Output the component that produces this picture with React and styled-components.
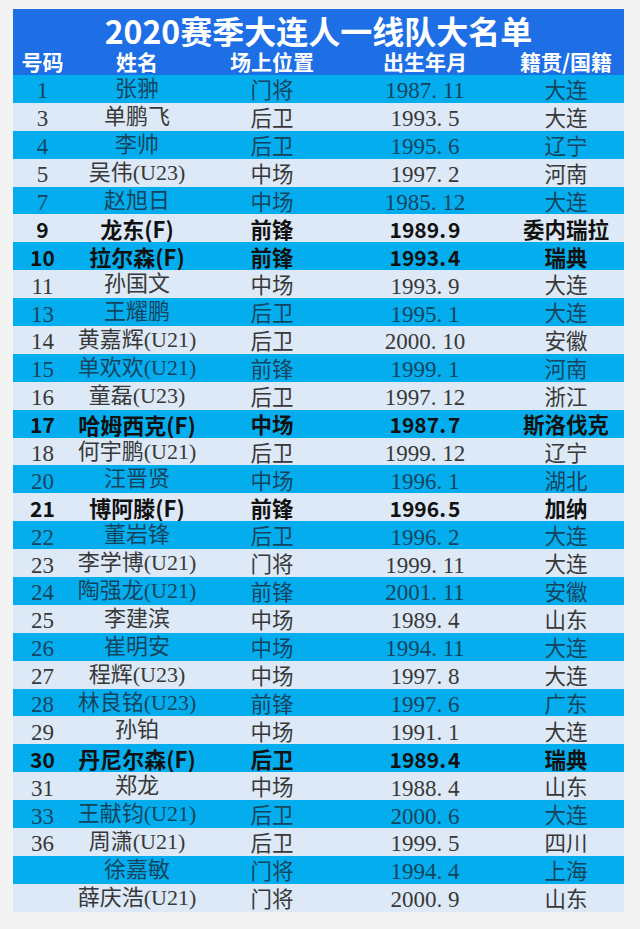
import styled, { createGlobalStyle, css } from 'styled-components';

const GlobalStyle = createGlobalStyle`
  html, body {
    margin: 0;
    padding: 0;
    background: #f3f3f3;
  }
  body {
    font-family: 'Noto Sans CJK SC', sans-serif;
  }
`;

const Page = styled.div`
  width: 640px;
  height: 929px;
  padding: 9px 0 0 13px;
  box-sizing: border-box;
`;

const Sheet = styled.div`
  width: 611px;
  display: flex;
  flex-direction: column;
`;

const Title = styled.div`
  height: 38px;
  display: flex;
  align-items: center;
  justify-content: center;
  background: #1e6fe6;
  color: #ffffff;
  font-family: 'Noto Sans CJK SC', sans-serif;
  font-weight: 700;
  font-size: 32px;
  line-height: 1;
  padding-top: 3px;
  box-sizing: border-box;
`;

const columns = '59px 130px 140px 166px 116px';

const HeaderRow = styled.div`
  display: grid;
  grid-template-columns: ${columns};
  height: 28px;
  background: #1e6fe6;
  color: #ffffff;
  font-family: 'Noto Sans CJK SC', sans-serif;
  font-weight: 700;
  font-size: 21px;
  line-height: 1;
`;

const HeadCell = styled.div`
  display: flex;
  align-items: center;
  justify-content: center;
  white-space: nowrap;
`;

const Row = styled.div`
  display: grid;
  grid-template-columns: ${columns};
  height: 27.9px;
  background: ${(p) => (p.$cyan ? '#04aeee' : '#dde9f6')};
  color: ${(p) => (p.$cyan ? '#14455f' : '#383838')};
  font-family: 'Liberation Serif', 'Noto Sans CJK SC', serif;
  font-size: 22px;
  line-height: 1;
  ${(p) =>
    p.$bold &&
    css`
      font-family: 'Noto Sans CJK SC', sans-serif;
      font-weight: 700;
      color: #111111;
    `}
`;

const Cell = styled.div`
  display: flex;
  align-items: center;
  justify-content: center;
  white-space: nowrap;
  box-sizing: border-box;
  padding-top: ${(p) => p.$shift || '0'};
  font-size: ${(p) => p.$size || 'inherit'};
`;

const CjkCell = styled(Cell)`
  font-family: 'Noto Sans CJK SC', sans-serif;
  font-size: 21.5px;
  font-weight: ${(p) => (p.$bold ? 700 : 400)};
`;

const Dot = styled.span`
  margin-right: ${(p) => (p.$bold ? '0.1em' : '0.25em')};
`;

const players = [
  ['1', '张翀', '门将', '1987.11', '大连'],
  ['3', '单鹏飞', '后卫', '1993.5', '大连'],
  ['4', '李帅', '后卫', '1995.6', '辽宁'],
  ['5', '吴伟(U23)', '中场', '1997.2', '河南'],
  ['7', '赵旭日', '中场', '1985.12', '大连'],
  ['9', '龙东(F)', '前锋', '1989.9', '委内瑞拉', true],
  ['10', '拉尔森(F)', '前锋', '1993.4', '瑞典', true],
  ['11', '孙国文', '中场', '1993.9', '大连'],
  ['13', '王耀鹏', '后卫', '1995.1', '大连'],
  ['14', '黄嘉辉(U21)', '后卫', '2000.10', '安徽'],
  ['15', '单欢欢(U21)', '前锋', '1999.1', '河南'],
  ['16', '童磊(U23)', '后卫', '1997.12', '浙江'],
  ['17', '哈姆西克(F)', '中场', '1987.7', '斯洛伐克', true],
  ['18', '何宇鹏(U21)', '后卫', '1999.12', '辽宁'],
  ['20', '汪晋贤', '中场', '1996.1', '湖北'],
  ['21', '博阿滕(F)', '前锋', '1996.5', '加纳', true],
  ['22', '董岩锋', '后卫', '1996.2', '大连'],
  ['23', '李学博(U21)', '门将', '1999.11', '大连'],
  ['24', '陶强龙(U21)', '前锋', '2001.11', '安徽'],
  ['25', '李建滨', '中场', '1989.4', '山东'],
  ['26', '崔明安', '中场', '1994.11', '大连'],
  ['27', '程辉(U23)', '中场', '1997.8', '大连'],
  ['28', '林良铭(U23)', '前锋', '1997.6', '广东'],
  ['29', '孙铂', '中场', '1991.1', '大连'],
  ['30', '丹尼尔森(F)', '后卫', '1989.4', '瑞典', true],
  ['31', '郑龙', '中场', '1988.4', '山东'],
  ['33', '王献钧(U21)', '后卫', '2000.6', '大连'],
  ['36', '周潇(U21)', '后卫', '1999.5', '四川'],
  ['', '徐嘉敏', '门将', '1994.4', '上海'],
  ['', '薛庆浩(U21)', '门将', '2000.9', '山东'],
];

function BirthDate({ value, bold }) {
  const [year, month] = value.split('.');
  return (
    <Cell $size={bold ? '21px' : '23px'} $shift={bold ? '2px' : '4px'}>
      {year}
      <Dot $bold={bold}>.</Dot>
      {month}
    </Cell>
  );
}

export default function App() {
  return (
    <Page>
      <GlobalStyle />
      <Sheet>
        <Title>2020赛季大连人一线队大名单</Title>
        <HeaderRow>
          <HeadCell>号码</HeadCell>
          <HeadCell>姓名</HeadCell>
          <HeadCell>场上位置</HeadCell>
          <HeadCell>出生年月</HeadCell>
          <HeadCell>籍贯/国籍</HeadCell>
        </HeaderRow>
        {players.map(([no, name, pos, born, origin, bold], i) => (
          <Row key={name} $cyan={i % 2 === 0} $bold={bold}>
            <Cell $size={bold ? '21px' : '23px'} $shift={bold ? '2px' : '4px'}>
              {no}
            </Cell>
            <Cell>{name}</Cell>
            <CjkCell $bold={bold}>{pos}</CjkCell>
            <BirthDate value={born} bold={bold} />
            <CjkCell $bold={bold}>{origin}</CjkCell>
          </Row>
        ))}
      </Sheet>
    </Page>
  );
}
